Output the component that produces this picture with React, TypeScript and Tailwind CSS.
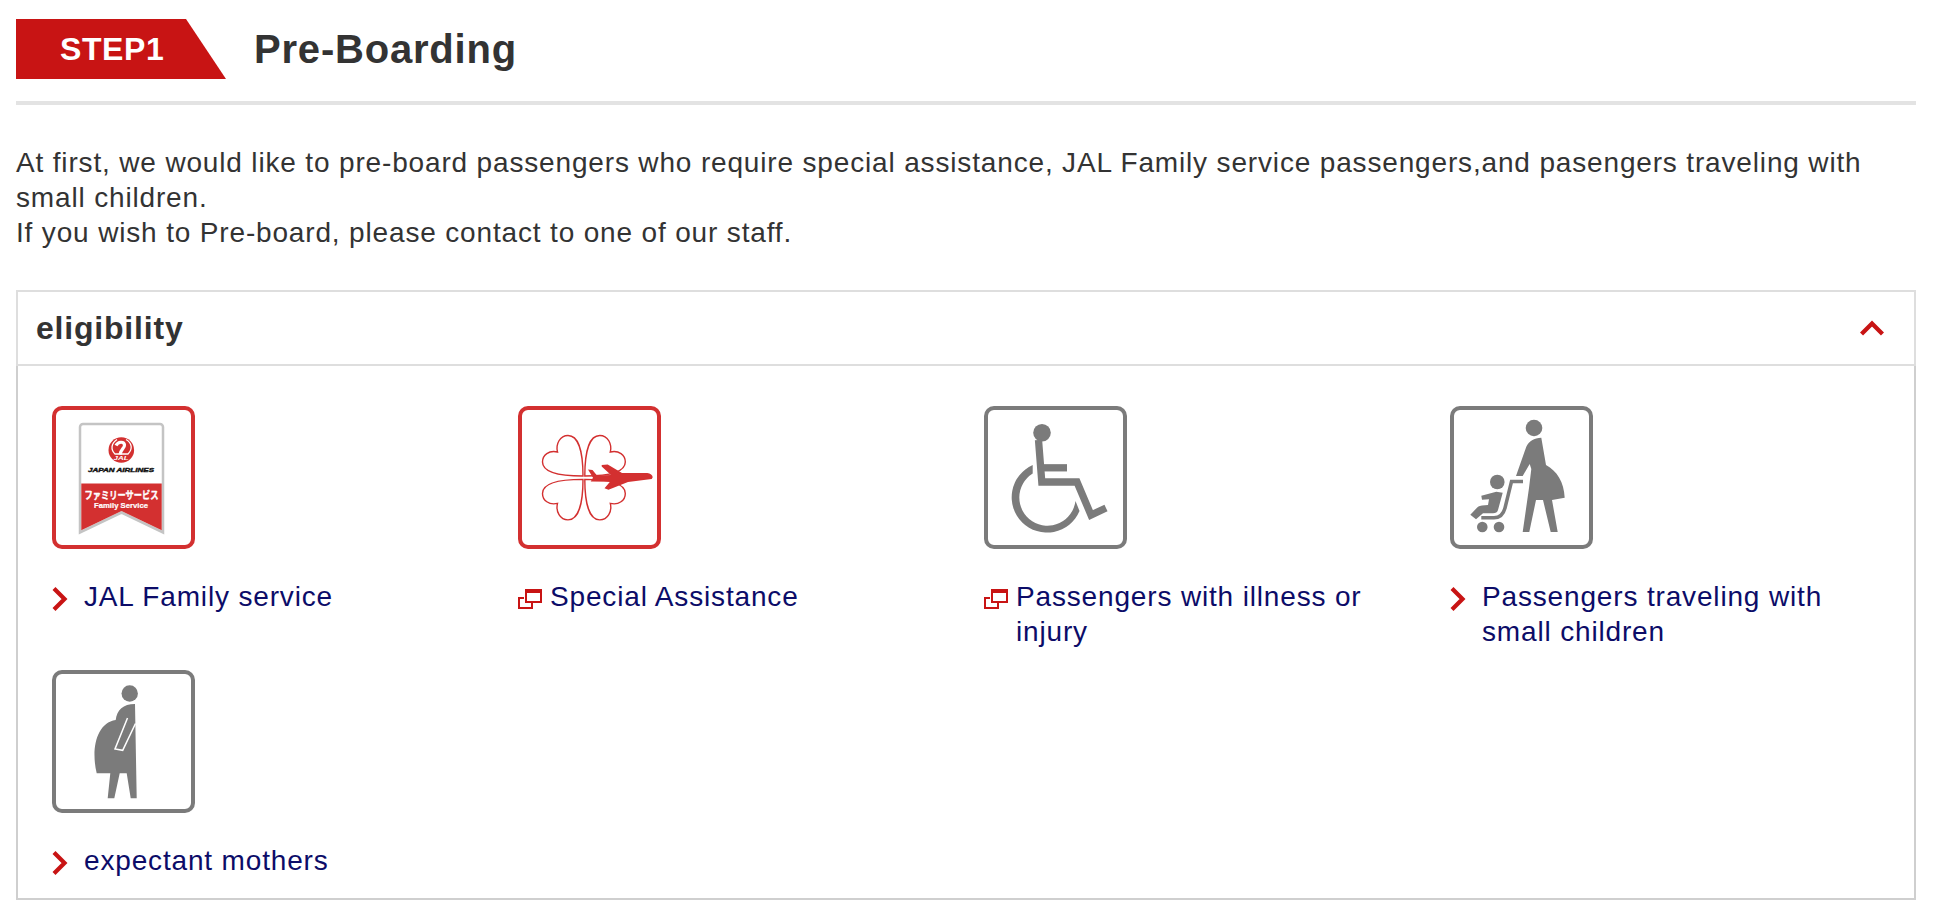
import React from 'react';

type LinkKind = 'arrow' | 'window';

interface EligibilityItem {
  id: string;
  label: string;
  kind: LinkKind;
  picture: React.ReactNode;
}

const RED = '#d33030';
const GRAY = '#7b7b7b';

const Tile: React.FC<{ color: string; children: React.ReactNode }> = ({ color, children }) => (
  <svg className="block h-[143px] w-[143px] tracking-normal" viewBox="0 0 143 143" fill="none">
    <rect x="2" y="2" width="139" height="139" rx="8" stroke={color} strokeWidth="4" />
    {children}
  </svg>
);

const FamilyServicePicture = () => (
  <Tile color={RED}>
    <path d="M31 18h77a3 3 0 0 1 3 3v105.500l-41.500-20-41.500 20V21a3 3 0 0 1 3-3z" fill="#fff" stroke="#c4c4c4" strokeWidth="2.500" />
    <path d="M29.300 77.500h80.400v46.800l-40.200-19.300-40.200 19.300z" fill={RED} />
    <circle cx="69.300" cy="44" r="12.800" fill={RED} />
    {/* crane: spread wings with the neck curling over the chest */}
    <path d="M65 33.500c-6 4-6.500 10-2 14.500h13c5-5 4-11-2-14.500" stroke="#fff" strokeWidth="1.300" />
    <path d="M64 39.500c2-4 8-4.500 8.500-.500.300 3-3.500 4-4.500 9.500" stroke="#fff" strokeWidth="3.200" />
    <text x="61.500" y="54.300" fill="#fff" fontSize="6.200" fontWeight="bold" fontStyle="italic" textLength="15" lengthAdjust="spacingAndGlyphs">JAL</text>
    <text x="36" y="66.300" fill="#111" stroke="#111" strokeWidth=".4" fontSize="6" fontWeight="bold" fontStyle="italic" textLength="66" lengthAdjust="spacingAndGlyphs">JAPAN AIRLINES</text>
    <text x="32.500" y="92.500" fill="#fff" stroke="#fff" strokeWidth=".4" fontSize="10.500" fontWeight="bold" fontFamily="'Noto Sans CJK JP', sans-serif" textLength="74" lengthAdjust="spacingAndGlyphs">ファミリーサービス</text>
    <text x="42" y="102" fill="#fff" stroke="#fff" strokeWidth=".2" fontSize="7.800" fontWeight="bold" textLength="54" lengthAdjust="spacingAndGlyphs">Family Service</text>
  </Tile>
);

const leaf = 'M65 70C65 45 60 29.500 50 29.500C42 29.500 37.500 38 39.500 46C31 44 24.500 49 24.500 56C24.500 66 40 70 65 70Z';

const SpecialAssistancePicture = () => (
  <Tile color={RED}>
    <g stroke={RED} strokeWidth="1.400">
      <path d={leaf} />
      <path d={leaf} transform="matrix(-1 0 0 1 131.800 0)" />
      <path d={leaf} transform="matrix(1 0 0 -1 0 143.400)" />
      <path d={leaf} transform="matrix(-1 0 0 -1 131.800 143.400)" />
    </g>
    <path d="M70 63.500l4.500.500 4.500 5.500L93 69l-9.300-8.500 0-1.500 6-.500 14.300 8.500 25.300 0c3 .500 5.400 2 5.400 4.200l-1 1.700-23.700 3.100L90.500 83.800 86.500 82.300l5.500-6.600L72.700 75.500l2.300-3.800z" fill={RED} />
  </Tile>
);

const WheelchairPicture = () => (
  <Tile color={GRAY}>
    <circle cx="58" cy="26.700" r="8.800" fill={GRAY} />
    <path d="M54.500 34l3.300 42h35.200l14 33 15-7" stroke={GRAY} strokeWidth="7.300" />
    <path d="M57 61.800h26" stroke={GRAY} strokeWidth="7.300" />
    <path d="M48.700 59A35.300 35.300 0 1 0 95.500 105L91.500 95A28.200 28.200 0 1 1 48.700 67.500Z" fill={GRAY} />
  </Tile>
);

const StrollerPicture = () => (
  <Tile color={GRAY}>
    <g fill={GRAY}>
      <circle cx="84" cy="22" r="8.300" />
      <path d="M91.300 31.700L96 59C107 65 114 76 114.700 91.700L102 94l5.700 32h-7L93 94h-7l-6.700 32h-6.600L79 82l2.300-19-1.600-5-7 12H66l10.300-29.300C79 35 84 32 91.300 31.700z" />
      <circle cx="47.300" cy="76" r="7.300" />
      <path d="M31.300 89.700l15-4 6.400 1L48 104q-1 3.300-5 3.300H33l-7 6-5.700-4.600 7.700-8q3-1.700 10-1.700l1-5.700-7 .500z" />
      <circle cx="32.300" cy="121" r="5.300" />
      <circle cx="49" cy="121" r="5.300" />
    </g>
    <path d="M73 75.500H61.500L55 102q-2.500 9.700-11 9.700H31.300" stroke={GRAY} strokeWidth="3.500" />
  </Tile>
);

const ExpectantMotherPicture = () => (
  <Tile color={GRAY}>
    <circle cx="77.700" cy="23.500" r="8.200" fill={GRAY} />
    <path d="M83 34l1.700 94.300h-6l-4-25h-7l-5.400 25h-6.600l2.600-25H44.700C39 80 44 53 63.700 50 65 40 71 34 83 34z" fill={GRAY} />
    <path d="M75.500 48L63 79l7.700 1.300L83.500 53.500" stroke="#fff" strokeWidth="1.500" />
  </Tile>
);

const items: EligibilityItem[] = [
  { id: 'family', label: 'JAL Family service', kind: 'arrow', picture: <FamilyServicePicture /> },
  { id: 'assistance', label: 'Special Assistance', kind: 'window', picture: <SpecialAssistancePicture /> },
  { id: 'illness', label: 'Passengers with illness or injury', kind: 'window', picture: <WheelchairPicture /> },
  { id: 'children', label: 'Passengers traveling with small children', kind: 'arrow', picture: <StrollerPicture /> },
  { id: 'mothers', label: 'expectant mothers', kind: 'arrow', picture: <ExpectantMotherPicture /> },
];

const LinkMarker: React.FC<{ kind: LinkKind }> = ({ kind }) => {
  if (kind === 'window') {
    return (
      <svg className="mt-2.5 h-5 w-8 shrink-0" viewBox="0 0 32 20" fill="none" stroke="#c81414" strokeWidth="2">
        <path d="M8 1h15v12H8zM7 3h17M6 9H1v10h13v-5" />
      </svg>
    );
  }
  return (
    <svg className="mt-2 h-6 w-8 shrink-0" viewBox="0 0 32 24" fill="none" stroke="#c81414" strokeWidth="4.200">
      <path d="M2 1.500l10.500 10.500L2 22.500" />
    </svg>
  );
};

export default function App() {
  return (
    <main className="h-[924px] bg-white pt-[19px] pr-5 pl-4 font-['Liberation_Sans',Arial,sans-serif] text-[28px] leading-[35px] tracking-[0.84px] text-[#333]">
      <header className="flex h-[86px] items-start border-b-4 border-[#e3e3e3]">
        <div className="h-[60px] w-[210px] bg-[#c81414] pl-11 text-[32px] leading-[60px] font-bold tracking-[0.6px] text-white [clip-path:polygon(0_0,170px_0,210px_100%,0_100%)]">
          STEP1
        </div>
        <h1 className="ml-7 text-[40px] leading-[60px] font-bold tracking-[0.8px]">Pre-Boarding</h1>
      </header>

      <p className="mt-10">
        At first, we would like to pre-board passengers who require special assistance, JAL Family service passengers,and pasengers traveling with small children.
        <br />
        If you wish to Pre-board, please contact to one of our staff.
      </p>

      <section className="mt-10">
        <div className="flex h-[76px] items-center justify-between border-2 border-[#dedede] pr-[30px] pl-[18px]">
          <h2 className="text-[32px] font-bold tracking-[0.8px]">eligibility</h2>
          <svg className="h-4 w-6" viewBox="0 0 24 16" fill="none" stroke="#c81414" strokeWidth="4.400">
            <path d="M1.500 14L12 3.500 22.500 14" />
          </svg>
        </div>
        <ul className="grid h-[534px] grid-cols-[repeat(4,466px)] grid-rows-[264px_auto] border-2 border-t-0 border-[#cfcfcf] pt-10 pl-[34px]">
          {items.map((item) => (
            <li key={item.id}>
              {item.picture}
              <a href="#" className="mt-[30px] flex w-[400px] text-[#0c0c68]">
                <LinkMarker kind={item.kind} />
                <span>{item.label}</span>
              </a>
            </li>
          ))}
        </ul>
      </section>
    </main>
  );
}
